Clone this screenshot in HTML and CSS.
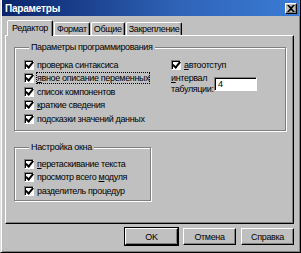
FILE: index.html
```html
<!DOCTYPE html>
<html lang="ru">
<head>
  <meta charset="UTF-8" />
  <title>Параметры</title>
  <link rel="stylesheet" href="styles.css">
</head>
<body>
  <div class="window">
    <div class="titlebar">
      <span class="title">Параметры</span>
      <span class="close">
        <svg width="8" height="7" viewBox="0 0 8 7"><path d="M0 0h2l2 2 2-2h2L5 3.5 8 7H6L4 5 2 7H0l3-3.5z" fill="#000"/></svg>
      </span>
    </div>
    <div class="body">
      <div class="tabs">
        <div class="tab active">Редактор</div>
        <div class="tab">Формат</div>
        <div class="tab">Общие</div>
        <div class="tab">Закрепление</div>
      </div>
      <div class="panel">
        <fieldset class="group group-prog">
          <legend>Параметры программирования</legend>
          <div class="cols">
            <div class="col">
              <div class="check"><span class="box"></span><span>проверка синтаксиса</span></div>
              <div class="check"><span class="box"></span><span class="focus"><u>я</u>вное описание переменных</span></div>
              <div class="check"><span class="box"></span><span>список компонентов</span></div>
              <div class="check"><span class="box"></span><span><u>к</u>раткие сведения</span></div>
              <div class="check"><span class="box"></span><span>подсказки значений данных</span></div>
            </div>
            <div class="col col-right">
              <div class="check"><span class="box"></span><span><u>а</u>втоотступ</span></div>
              <div class="tabsize">
                <span class="tabsize-label"><u>и</u>нтервал<br>табуляции:</span>
                <span class="input">4</span>
              </div>
            </div>
          </div>
        </fieldset>
        <fieldset class="group group-win">
          <legend>Настройка окна</legend>
          <div class="check"><span class="box"></span><span><u>п</u>еретаскивание текста</span></div>
          <div class="check"><span class="box"></span><span>просмотр всего <u>м</u>одуля</span></div>
          <div class="check"><span class="box"></span><span>разделитель процедур</span></div>
        </fieldset>
      </div>
      <div class="buttons">
        <div class="btn default">OK</div>
        <div class="btn">Отмена</div>
        <div class="btn">Справка</div>
      </div>
    </div>
  </div>
</body>
</html>
```

FILE: styles.css
```css
* { box-sizing: border-box; }
html, body { margin: 0; padding: 0; background: #c0c0c0; }
body {
  font-family: "Liberation Sans", Arial, sans-serif;
  font-size: 9px;
  letter-spacing: -0.35px;
  color: #000;
  white-space: nowrap;
}

.window {
  width: 301px;
  height: 253px;
  background: #c0c0c0;
  border: 1px solid;
  border-top: none;
  border-color: #dfdfdf #000 #000 #dfdfdf;
  box-shadow: inset 1px 0 #fff, inset -1px -1px #808080;
  padding: 0 1px 1px 1px;
  overflow: hidden;
}

.titlebar {
  height: 16px;
  background: linear-gradient(to right, #0a246a, #2f64b8 60%, #3a7bd5);
  display: flex;
  align-items: center;
  justify-content: space-between;
  padding: 0 2px 0 3px;
}
.title { color: #fff; font-weight: bold; font-size: 10px; letter-spacing: -0.2px; }
.close {
  width: 12px;
  height: 11px;
  background: #c0c0c0;
  border: 1px solid;
  border-color: #fff #000 #000 #fff;
  box-shadow: inset -1px -1px #808080;
  display: flex;
  align-items: center;
  justify-content: center;
}

.body { padding: 4px 5px 0 3px; }

.tabs { display: flex; height: 15px; align-items: flex-end; padding-left: 2px; }
.tab {
  height: 13px;
  padding: 0 2px;
  border: 1px solid;
  border-bottom: none;
  border-color: #fff #000 transparent #fff;
  box-shadow: inset -1px 0 #808080;
  border-radius: 2px 2px 0 0;
  line-height: 12px;
  margin-right: 1px;
}
.tab.active {
  height: 16px;
  padding: 0 4px;
  margin-bottom: -1px;
  background: #c0c0c0;
  position: relative;
  z-index: 1;
  line-height: 14px;
}

.panel {
  height: 189px;
  border: 1px solid;
  border-color: #fff #000 #000 #fff;
  box-shadow: inset -1px -1px #808080;
  padding: 6px 7px 0 8px;
}

.group {
  margin: 0;
  min-width: 0;
  padding: 0 0 0 9px;
  border: 1px solid #808080;
  box-shadow: inset 1px 1px #fff, 1px 1px #fff;
}
.group legend {
  padding: 0 2px;
  margin-left: 5px;
  line-height: 11px;
  background: #c0c0c0;
}
.group-prog { height: 89px; padding-top: 5px; }
.group-win { width: 137px; height: 59px; margin-top: 11px; padding-top: 4px; }

.cols { display: flex; }
.col { width: 147px; flex: none; }
.col-right { flex: 1; }

.check { display: flex; align-items: center; height: 13.5px; }
.box {
  width: 10px;
  height: 10px;
  flex: none;
  margin-right: 3px;
  background: #fff;
  border: 1px solid;
  border-color: #808080 #fff #fff #808080;
  box-shadow: inset 1px 1px #000;
  display: inline-flex;
  align-items: center;
  justify-content: center;
}
.box::after {
  content: "";
  width: 3px;
  height: 6px;
  margin: -2px 0 0 1px;
  border: solid #000;
  border-width: 0 2px 2px 0;
  transform: rotate(40deg);
}
.focus { outline: 1px dotted #000; }

.tabsize { display: flex; align-items: center; margin-top: 1px; }
.tabsize-label { line-height: 11px; width: 43px; }
.input {
  width: 43px;
  height: 14px;
  background: #fff;
  border: 1px solid;
  border-color: #808080 #fff #fff #808080;
  box-shadow: inset 1px 1px #000;
  padding-left: 3px;
  line-height: 12px;
}

.buttons { display: flex; justify-content: flex-end; gap: 5px; padding: 4px 0 0 0; }
.btn {
  width: 53px;
  height: 17px;
  border: 1px solid;
  border-color: #fff #000 #000 #fff;
  box-shadow: inset -1px -1px #808080;
  display: flex;
  align-items: center;
  justify-content: center;
}
.btn.default {
  box-shadow: inset -1px -1px #808080, 0 0 0 1px #000;
}
```
